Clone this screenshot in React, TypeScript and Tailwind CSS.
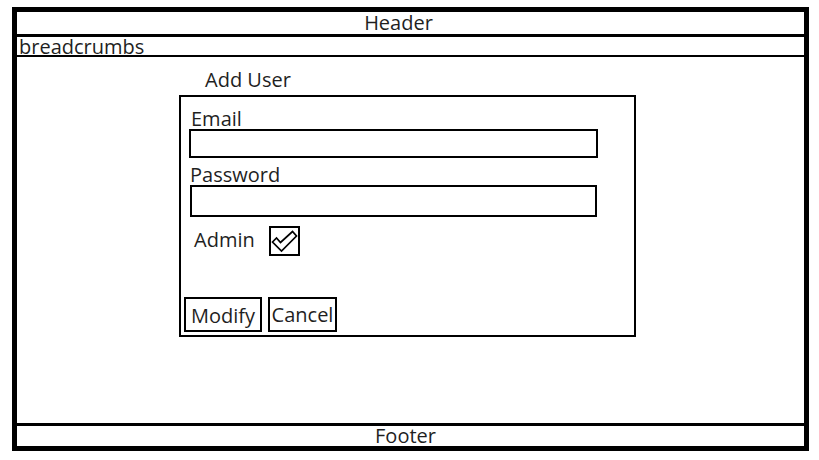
import { useState } from "react";

export default function App() {
  const [admin, setAdmin] = useState(true);

  return (
    <div className="h-screen bg-white pt-[7px] pr-2.5 pb-[9px] pl-3 font-['Open_Sans','Noto_Sans',sans-serif] text-[20px] leading-[22px] text-[#1f1f1f]">
      <div className="flex h-full flex-col border-5 border-black">
        <header className="border-b-3 border-black pr-6 text-center">Header</header>
        <nav aria-label="Breadcrumbs" className="h-5 border-b-2 border-black pl-0.5 leading-[20px]">
          breadcrumbs
        </nav>
        <main className="flex grow flex-col items-center pt-3 pr-1.5">
          <form className="w-[457px]" onSubmit={(event) => event.preventDefault()}>
            <h1 className="mb-1 pl-[26px]">Add User</h1>
            <div className="border-2 border-black pt-3 pb-[3px]">
              <div className="flex flex-col pr-9 pl-2">
                <label htmlFor="email" className="pl-0.5 leading-[20px]">Email</label>
                <input id="email" type="email" className="h-[29px] border-2 border-black px-1 outline-none" />
                <label htmlFor="password" className="mt-[7px] pl-px leading-[20px]">Password</label>
                <input id="password" type="password" className="ml-px mr-px h-8 border-2 border-black px-1 outline-none" />
              </div>
              <div className="mt-[9px] flex items-center pl-[13px]">
                <label htmlFor="admin" className="w-[75px] pb-0.5">Admin</label>
                <span className="grid h-[30px] w-[31px]">
                  <input
                    id="admin"
                    type="checkbox"
                    checked={admin}
                    onChange={(event) => setAdmin(event.target.checked)}
                    className="col-start-1 row-start-1 appearance-none border-2 border-black"
                  />
                  {admin && (
                    <svg viewBox="0 0 31 30" aria-hidden="true" className="pointer-events-none col-start-1 row-start-1" fill="none" stroke="black" strokeWidth="1.7">
                      <path d="M3.5 16 L7.5 12 L11.5 16.5 L23.5 5.5 L27.5 10 L12.5 25 Z" />
                    </svg>
                  )}
                </span>
              </div>
              <div className="mt-[41px] flex gap-1.5 pl-[3px]">
                <button type="submit" className="h-[35px] w-[78px] border-2 border-black pt-0.5">Modify</button>
                <button type="button" className="h-[35px] w-[69px] border-2 border-black">Cancel</button>
              </div>
            </div>
          </form>
        </main>
        <footer className="border-t-3 border-black pr-2.5 text-center leading-[20px]">Footer</footer>
      </div>
    </div>
  );
}
